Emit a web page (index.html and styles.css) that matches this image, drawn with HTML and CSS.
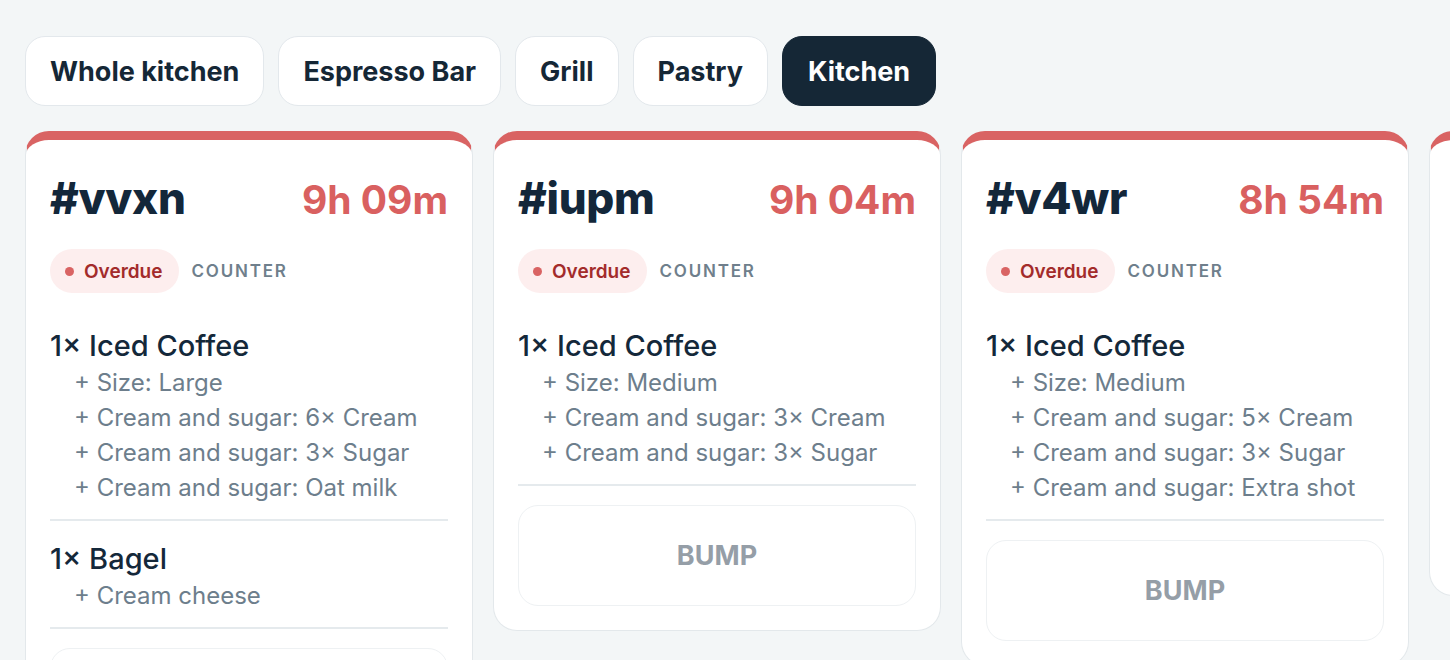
FILE: index.html
```html
<!DOCTYPE html>
<html lang="en">
<head>
<meta charset="utf-8">
<title>Kitchen display</title>
<link rel="stylesheet" href="styles.css">
</head>
<body>
<div class="app">
  <nav class="tabs">
    <button class="tab">Whole kitchen</button>
    <button class="tab">Espresso Bar</button>
    <button class="tab">Grill</button>
    <button class="tab">Pastry</button>
    <button class="tab tab-active">Kitchen</button>
  </nav>
  <main class="board">
    <article class="card">
      <header class="card-head">
        <span class="order-id">#vvxn</span>
        <span class="elapsed">9h 09m</span>
      </header>
      <div class="meta">
        <span class="badge"><span class="dot"></span>Overdue</span>
        <span class="channel">COUNTER</span>
      </div>
      <div class="items">
        <div class="item">
          <div class="item-name">1× Iced Coffee</div>
          <div class="mod">+ Size: Large</div>
          <div class="mod">+ Cream and sugar: 6× Cream</div>
          <div class="mod">+ Cream and sugar: 3× Sugar</div>
          <div class="mod">+ Cream and sugar: Oat milk</div>
        </div>
        <div class="item">
          <div class="item-name">1× Bagel</div>
          <div class="mod">+ Cream cheese</div>
        </div>
      </div>
      <button class="bump">BUMP</button>
    </article>
    <article class="card">
      <header class="card-head">
        <span class="order-id">#iupm</span>
        <span class="elapsed">9h 04m</span>
      </header>
      <div class="meta">
        <span class="badge"><span class="dot"></span>Overdue</span>
        <span class="channel">COUNTER</span>
      </div>
      <div class="items">
        <div class="item">
          <div class="item-name">1× Iced Coffee</div>
          <div class="mod">+ Size: Medium</div>
          <div class="mod">+ Cream and sugar: 3× Cream</div>
          <div class="mod">+ Cream and sugar: 3× Sugar</div>
        </div>
      </div>
      <button class="bump">BUMP</button>
    </article>
    <article class="card">
      <header class="card-head">
        <span class="order-id">#v4wr</span>
        <span class="elapsed">8h 54m</span>
      </header>
      <div class="meta">
        <span class="badge"><span class="dot"></span>Overdue</span>
        <span class="channel">COUNTER</span>
      </div>
      <div class="items">
        <div class="item">
          <div class="item-name">1× Iced Coffee</div>
          <div class="mod">+ Size: Medium</div>
          <div class="mod">+ Cream and sugar: 5× Cream</div>
          <div class="mod">+ Cream and sugar: 3× Sugar</div>
          <div class="mod">+ Cream and sugar: Extra shot</div>
        </div>
      </div>
      <button class="bump">BUMP</button>
    </article>
    <article class="card">
      <header class="card-head">
        <span class="order-id">#k2pq</span>
        <span class="elapsed">8h 41m</span>
      </header>
      <div class="meta">
        <span class="badge"><span class="dot"></span>Overdue</span>
        <span class="channel">COUNTER</span>
      </div>
      <div class="items">
        <div class="item">
          <div class="item-name">1× Latte</div>
          <div class="mod">+ Size: Small</div>
          <div class="mod">+ Milk: Oat milk</div>
        </div>
      </div>
      <button class="bump">BUMP</button>
    </article>
  </main>
</div>
</body>
</html>
```

FILE: styles.css
```css
* { box-sizing: border-box; }

html, body {
  margin: 0;
  height: 100%;
  overflow: hidden;
}

body {
  background: #f3f6f7;
  font-family: Inter, "Noto Sans", "Liberation Sans", sans-serif;
  color: #14283a;
}

.app {
  padding: 36px 0 0 25px;
}

.tabs {
  display: flex;
  gap: 14px;
}

.tab {
  height: 70px;
  padding: 0 24px;
  border: 1px solid #e3e8ec;
  border-radius: 20px;
  background: #ffffff;
  color: #152736;
  font-family: inherit;
  font-size: 27px;
  font-weight: 700;
}

.tab-active {
  padding: 0 25px;
  background: #152736;
  border-color: #152736;
  color: #ffffff;
}

.board {
  display: flex;
  align-items: flex-start;
  gap: 20px;
  margin-top: 25px;
}

.card {
  flex: 0 0 448px;
  display: flex;
  flex-direction: column;
  background: #ffffff;
  border: 1px solid #e3e8eb;
  border-top: 9px solid #d96363;
  border-radius: 24px;
  padding: 24px;
}

.card-head {
  display: flex;
  justify-content: space-between;
  align-items: baseline;
  padding-top: 5px;
  line-height: 58px;
}

.order-id {
  font-size: 44px;
  font-weight: 800;
  color: #13273a;
  letter-spacing: -0.3px;
}

.elapsed {
  font-size: 39px;
  font-weight: 700;
  color: #d96060;
}

.meta {
  display: flex;
  align-items: center;
  gap: 13px;
  margin-top: 20px;
}

.badge {
  display: inline-flex;
  align-items: center;
  gap: 10px;
  height: 44px;
  padding: 0 16px 0 15px;
  border-radius: 22px;
  background: #fdeeee;
  color: #a32b2b;
  font-size: 19px;
  font-weight: 600;
}

.dot {
  width: 9px;
  height: 9px;
  border-radius: 50%;
  background: #d96363;
}

.channel {
  font-size: 17px;
  font-weight: 600;
  letter-spacing: 1.8px;
  color: #6f7f8c;
}

.items {
  margin-top: 34px;
}

.item {
  padding-bottom: 14px;
  border-bottom: 2px solid #e5eaed;
}

.item + .item {
  padding-top: 19px;
}

.item-name {
  font-size: 29px;
  font-weight: 500;
  line-height: 38px;
  color: #14283a;
}

.mod {
  padding-left: 24px;
  font-size: 24px;
  line-height: 35px;
  color: #6d7e8c;
}

.bump {
  margin-top: 19px;
  height: 101px;
  border: 1px solid #eef1f3;
  border-radius: 20px;
  background: #ffffff;
  color: #959ea7;
  font-family: inherit;
  font-size: 27px;
  font-weight: 700;
}
```
